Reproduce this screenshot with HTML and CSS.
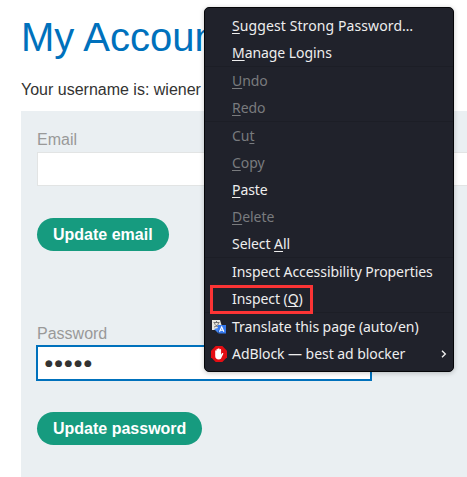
FILE: index.html
```
<!DOCTYPE html>
<html lang="en">
<head>
<meta charset="utf-8">
<title>My Account</title>
<link rel="stylesheet" href="styles.css">
</head>
<body>
<main class="page">
  <h1>My Account</h1>
  <p class="username">Your username is: wiener</p>
  <section class="account">
    <form class="form">
      <label for="email">Email</label>
      <input class="field" id="email" type="text">
      <button class="button" type="button">Update email</button>
    </form>
    <form class="form">
      <label for="password">Password</label>
      <div class="field password" id="password">●●●●●</div>
      <button class="button" type="button">Update password</button>
    </form>
  </section>
</main>
<nav class="menu">
  <div class="item wide"><span><u>S</u>uggest Strong Password…</span></div>
  <div class="item"><span><u>M</u>anage Logins</span></div>
  <hr>
  <div class="item disabled"><span><u>U</u>ndo</span></div>
  <div class="item disabled"><span><u>R</u>edo</span></div>
  <hr>
  <div class="item disabled"><span>Cu<u>t</u></span></div>
  <div class="item disabled"><span><u>C</u>opy</span></div>
  <div class="item"><span><u>P</u>aste</span></div>
  <div class="item disabled"><span><u>D</u>elete</span></div>
  <div class="item"><span>Select <u>A</u>ll</span></div>
  <hr>
  <div class="item"><span>Inspect Accessibility Properties</span></div>
  <div class="item marked"><span>Inspect (<u>Q</u>)</span></div>
  <hr>
  <div class="item">
    <svg class="icon" viewBox="0 0 16 16"><path d="M1 1h8l3 10H1z" fill="#e8e8e0"/><path d="M2.500 3.500h6M5.500 2v1.500M3.500 4c.5 2 2 3.500 4 4M7.500 4c-.5 2-2 3.500-4.500 4" fill="none" stroke="#666" stroke-width=".9"/><path d="M3 10l4 4V9z" fill="#4285f4"/><path d="M6.500 6H15v8.500H7.500z" fill="#3478ed"/><path d="M8.500 12.800l2.200-5 2.200 5M9.400 11.200h2.600" fill="none" stroke="#fff" stroke-width="1.100"/></svg>
    <span>Translate this page (auto/en)</span>
  </div>
  <div class="item">
    <svg class="icon" viewBox="0 0 16 16"><path d="M4.700 0h6.600L16 4.700v6.600L11.300 16H4.700L0 11.300V4.700z" fill="#e40d13"/><path d="M4.200 8.200V5c0-1 1.200-1 1.300 0V3.500c.1-1 1.400-1 1.500 0v-.6c.1-1 1.500-1 1.600 0v.8c.1-1 1.500-1 1.500 0v5l.8-1.200c.6-.8 1.700-.3 1.300.6l-1.900 4c-.5 1-1.200 1.400-2.300 1.400-2.600 0-3.800-1.300-3.800-3.500z" fill="#fff"/></svg>
    <span>AdBlock — best ad blocker</span>
    <svg class="chevron" viewBox="0 0 6 8"><path d="M1 .8L4.300 4 1 7.200" fill="none" stroke="#eee" stroke-width="1.400"/></svg>
  </div>
</nav>
</body>
</html>
```
FILE: styles.css
```
*, *::after { box-sizing: border-box; }
body {
  margin: 0;
  height: 477px;
  overflow: hidden;
  background: #fff;
  color: #333332;
  font: 16px/18px "Liberation Sans", Arial, sans-serif;
}
.page { padding: 14px 0 0 21px; }
h1 {
  margin: 0;
  font-size: 40px;
  font-weight: 400;
  line-height: 46px;
  color: #0071bc;
}
.username { margin: 21px 0 12px; }
.account {
  height: 366px;
  padding: 20px 0 0 16px;
  background: #eaeff2;
}
.form {
  display: flex;
  flex-direction: column;
  align-items: flex-start;
  height: 194px;
}
.form:last-child { height: auto; }
label { color: #999; margin-bottom: 3px; }
.field {
  width: 100%;
  height: 34px;
  margin: 0 0 32px;
  padding: 0 8px;
  border: 1px solid #e2e4e4;
  border-right: 0;
  background: #fff;
}
.password {
  width: 334px;
  border: 0;
  outline: 2px solid #0071bc;
  outline-offset: -1px;
  font: 9px/35px "DejaVu Sans", sans-serif;
  letter-spacing: 1.900px;
}
.button {
  height: 33px;
  padding: 0 16px;
  border: 0;
  border-radius: 17px;
  background: #169b7f;
  color: #fff;
  font: bold 16px/18px "Liberation Sans", Arial, sans-serif;
}
.menu {
  position: absolute;
  left: 204px;
  top: 7px;
  width: 250px;
  height: 365px;
  padding: 4px 0;
  border: 1px solid #050609;
  border-radius: 5px;
  background: #20222b;
  box-shadow: 0 1px 5px rgba(0, 0, 0, .22);
  color: #eee;
  font: 14px/27px "Noto Sans", sans-serif;
  letter-spacing: -.06px;
}
.item {
  position: relative;
  display: flex;
  align-items: center;
  height: 27px;
  padding-left: 27px;
  white-space: nowrap;
}
.wide { letter-spacing: .1px; }
.disabled { color: #797b7e; }
.item u { text-underline-offset: 2px; text-decoration-thickness: 1px; text-decoration-skip-ink: none; }
hr { height: 1px; margin: 0; border: 0; background: #1c1e26; }
.icon { width: 16px; height: 16px; margin: 0 5px 0 -21px; }
.chevron { width: 6px; height: 8px; margin: 0 6px 0 auto; }
.marked::after {
  content: "";
  position: absolute;
  left: 5px;
  top: 0;
  width: 103px;
  height: 29px;
  border: 3px solid #fb3435;
}
```
